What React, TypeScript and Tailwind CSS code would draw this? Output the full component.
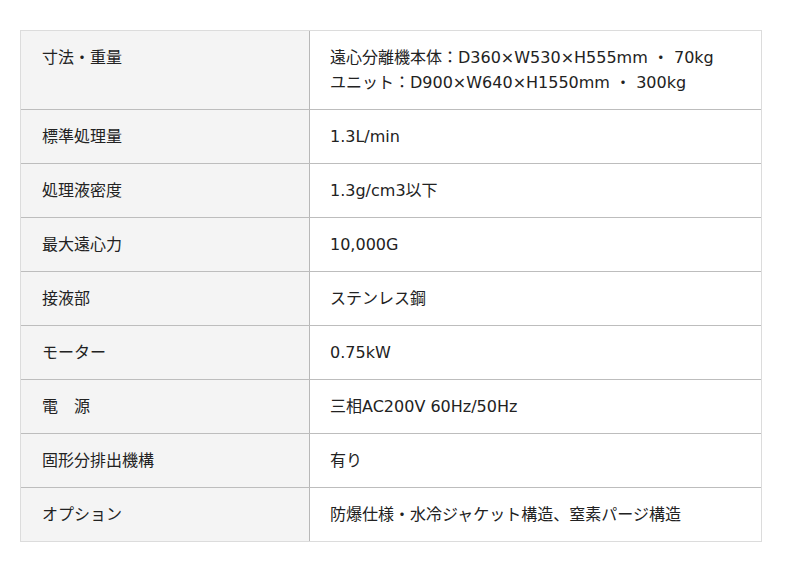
const specs: { label: string; value: string[] }[] = [
  {
    label: '寸法・重量',
    value: ['遠心分離機本体：D360×W530×H555mm ・ 70kg', 'ユニット：D900×W640×H1550mm ・ 300kg'],
  },
  { label: '標準処理量', value: ['1.3L/min'] },
  { label: '処理液密度', value: ['1.3g/cm3以下'] },
  { label: '最大遠心力', value: ['10,000G'] },
  { label: '接液部', value: ['ステンレス鋼'] },
  { label: 'モーター', value: ['0.75kW'] },
  { label: '電　源', value: ['三相AC200V 60Hz/50Hz'] },
  { label: '固形分排出機構', value: ['有り'] },
  { label: 'オプション', value: ['防爆仕様・水冷ジャケット構造、窒素パージ構造'] },
];

export default function App() {
  return (
    <div
      className="min-h-[572px] bg-white pt-[30px] pl-[20px] text-[16px] leading-[25px] text-[#222]"
      style={{ fontFamily: '"DejaVu Sans", "Noto Sans CJK JP", sans-serif' }}
    >
      <div className="w-[742px] border border-[#dcdcdc]">
        {specs.map((row, i) => (
          <div
            key={row.label}
            className={`flex ${i < specs.length - 1 ? 'border-b border-[#bdbdbd]' : ''}`}
          >
            <div className="w-[289px] shrink-0 border-r border-[#b8b8b8] bg-[#f4f4f4] px-[21px] py-[14px]">
              {row.label}
            </div>
            <div className="flex-1 pl-[20px] pr-[21px] py-[14px]">
              {row.value.map((v) => (
                <div key={v} className="whitespace-pre">
                  {v}
                </div>
              ))}
            </div>
          </div>
        ))}
      </div>
    </div>
  );
}
